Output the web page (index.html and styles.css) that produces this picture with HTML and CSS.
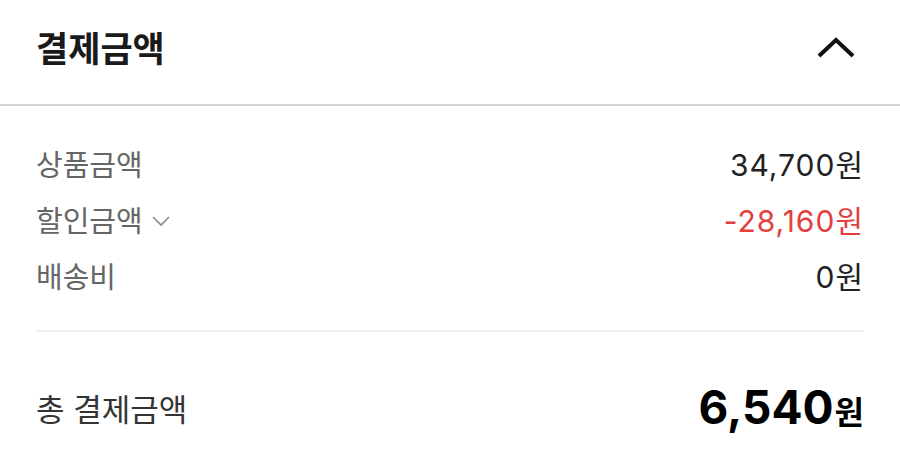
FILE: index.html
```html
<!DOCTYPE html>
<html lang="ko">
<head>
<meta charset="utf-8">
<link rel="stylesheet" href="styles.css">
</head>
<body>
<div class="panel">
  <div class="header">
    <h2 class="title">결제금액</h2>
    <svg class="toggle" width="40" height="22" viewBox="0 0 40 22"><path d="M3 19 L20 3 L37 19" fill="none" stroke="#111" stroke-width="4"/></svg>
  </div>
  <div class="body">
    <div class="rows">
      <div class="row"><span class="label">상품금액</span><span class="value">34,700원</span></div>
      <div class="row"><span class="label">할인금액<svg class="drop" width="20" height="12" viewBox="0 0 20 12"><path d="M2 2 L10 10 L18 2" fill="none" stroke="#8a8a8a" stroke-width="1.6"/></svg></span><span class="value red">-28,160원</span></div>
      <div class="row"><span class="label">배송비</span><span class="value">0원</span></div>
    </div>
    <div class="total">
      <span class="total-label">총 결제금액</span>
      <span class="total-value"><span class="num">6,540</span><span class="won">원</span></span>
    </div>
  </div>
</div>
</body>
</html>
```
FILE: styles.css
```css
html, body {
  margin: 0;
  padding: 0;
  background: #fff;
}
body {
  font-family: Inter, "Noto Sans CJK KR", sans-serif;
  width: 900px;
  height: 451px;
  overflow: hidden;
}
.header {
  height: 104px;
  padding: 0 36px;
  display: flex;
  align-items: center;
  justify-content: space-between;
  border-bottom: 2px solid #d6d6d6;
}
.title {
  margin: 0 0 6px 0;
  font-size: 35px;
  font-weight: 700;
  color: #1a1a1a;
  line-height: 1;
}
.toggle {
  margin-right: 8px;
  margin-bottom: 8px;
  display: block;
}
.body {
  padding: 0 36px;
}
.rows {
  padding-top: 29px;
  padding-bottom: 27px;
  border-bottom: 2px solid #efefef;
}
.row {
  height: 56px;
  display: flex;
  align-items: center;
  justify-content: space-between;
}
.label {
  font-size: 29px;
  color: #666;
  display: flex;
  align-items: center;
}
.drop {
  margin-left: 8px;
  margin-top: 4px;
}
.value {
  font-size: 30px;
  color: #222;
  letter-spacing: 1px;
}
.red {
  color: #e2403e;
}
.total {
  margin-top: 40px;
  height: 70px;
  display: flex;
  align-items: center;
  justify-content: space-between;
}
.total-label {
  font-size: 31px;
  color: #333;
}
.total-value {
  color: #000;
  font-weight: 700;
  display: flex;
  align-items: baseline;
}
.num {
  font-size: 46px;
}
.won {
  font-size: 32px;
  margin-left: 1px;
}
```
